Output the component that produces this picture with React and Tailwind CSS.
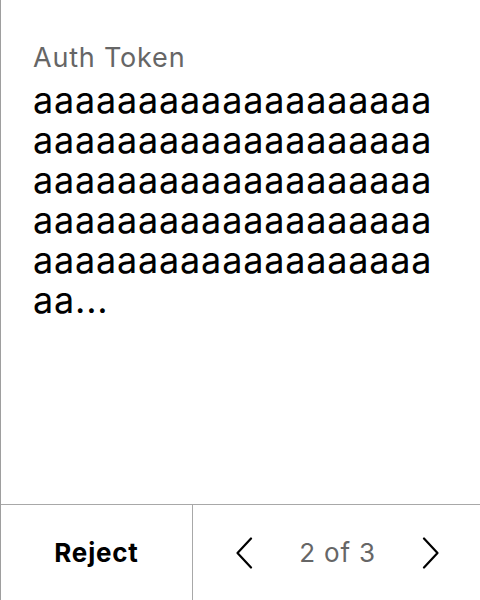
import React from 'react';

const token = 'a'.repeat(97) + '...';

const ChevronLeft = () => (
  <svg width="20" height="32" viewBox="0 0 20 32" fill="none" stroke="#000" strokeWidth="2.2" strokeLinecap="round" strokeLinejoin="round">
    <path d="M17 1.5 L3.5 16 L17 30.5" />
  </svg>
);

const ChevronRight = () => (
  <svg width="20" height="32" viewBox="0 0 20 32" fill="none" stroke="#000" strokeWidth="2.2" strokeLinecap="round" strokeLinejoin="round">
    <path d="M3 1.5 L16.5 16 L3 30.5" />
  </svg>
);

export default function App() {
  return (
    <div className="w-[480px] h-[600px] flex flex-col bg-white border-l border-[#9e9e9e] font-['Inter',sans-serif] tracking-wider">
      <div className="flex-1 pl-[32px] pt-[42px]">
        <div className="text-[27px] leading-[32px] text-[#666666]">Auth Token</div>
        <div className="mt-[6px] w-[410px] text-[36px] leading-[40px] text-black break-all">{token}</div>
      </div>
      <div className="h-[96px] flex border-t border-[#a8a8a8]">
        <button className="w-[191px] flex items-center justify-center text-[26px] font-bold text-black">
          Reject
        </button>
        <div className="flex-1 flex items-center justify-between border-l border-[#a8a8a8] pl-[41px] pr-[39px]">
          <ChevronLeft />
          <span className="text-[26px] text-[#666666]">2 of 3</span>
          <ChevronRight />
        </div>
      </div>
    </div>
  );
}
